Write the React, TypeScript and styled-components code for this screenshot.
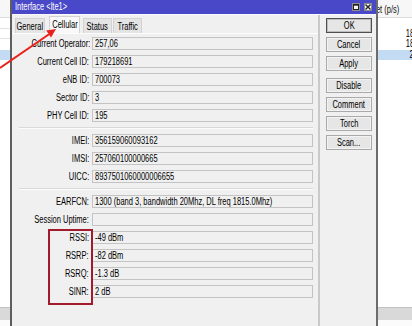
import React from "react";
import styled, { createGlobalStyle } from "styled-components";

const FONT = `"Liberation Sans", Arial, sans-serif`;

const Global = createGlobalStyle`
  html, body { margin: 0; padding: 0; background: #fff; }
  body { font-family: ${FONT}; font-size: 10px; color: #000; }
  * { box-sizing: border-box; }
`;

/* the screenshot's text is horizontally condensed: squeeze glyph runs */
const Txt = styled.span<{ $origin?: "left" | "right" | "center" }>`
  display: inline-block;
  white-space: nowrap;
  transform: scaleX(0.75);
  transform-origin: ${(p) => p.$origin ?? "left"} center;
`;

const Screen = styled.div`
  position: relative;
  width: 412px;
  height: 326px;
  overflow: hidden;
  display: flex;
  background: #fff;
`;

/* ---------- background list window ---------- */
const BgList = styled.div<{ $fixed?: number }>`
  flex: ${(p) => (p.$fixed ? `0 0 ${p.$fixed}px` : "1 1 0")};
  min-width: 0;
  display: flex;
  flex-direction: column;
  background: #fff;
`;

const BgHeader = styled.div`
  height: 18px;
  flex: 0 0 18px;
  display: flex;
  align-items: center;
  justify-content: flex-end;
  overflow: hidden;
  white-space: nowrap;
  padding: 2px 13px 0 0;
  background: #f7f7f7;
  border-bottom: 1px solid #dcdcdc;
  color: #111;
`;

const BgRow = styled.div<{ $selected?: boolean; $line?: boolean }>`
  height: 10.5px;
  flex: 0 0 10.5px;
  display: flex;
  align-items: center;
  justify-content: flex-end;
  overflow: hidden;
  white-space: nowrap;
  line-height: 10px;
  margin-right: -2px;
  background: ${(p) => (p.$selected ? "#c3dbf3" : "#fff")};
  border-bottom: ${(p) => (p.$line ? "1px solid #e2e2e2" : "none")};
  color: #000;
`;

const BgSpacer = styled.div`
  flex: 1 1 auto;
`;

const BgScroll = styled.div`
  flex: 0 0 13px;
  background: #d9d9d9;
  border-top: 1px solid #c2c2c2;
`;

const BgBottom = styled.div`
  flex: 0 0 6px;
  background: #fbfbfb;
`;

/* ---------- dialog ---------- */
const Dialog = styled.div`
  flex: 0 0 368px;
  display: flex;
  flex-direction: column;
  background: #f0f0f0;
  border-left: 2px solid #5e5e5e;
  border-right: 2px solid #6c6c6c;
`;

const TitleBar = styled.div`
  height: 15px;
  flex: 0 0 15px;
  display: flex;
  align-items: center;
  padding: 0 4px 1px 3px;
  background: #4848c8;
  border-bottom: 1px solid #fafafa;
  color: #fff;
`;

const TitleText = styled.div`
  flex: 1 1 auto;
  line-height: 13px;
  white-space: nowrap;
`;

const TitleButtons = styled.div`
  display: flex;
  gap: 4px;
`;

const TitleButton = styled.div`
  width: 8px;
  height: 8px;
  background: #f4f4f4;
  border: 1px solid #8c8c8c;
  display: flex;
  align-items: center;
  justify-content: center;
`;

const Body = styled.div`
  flex: 1 1 auto;
  display: flex;
`;

const TabArea = styled.div`
  flex: 0 0 308px;
  display: flex;
  flex-direction: column;
  border-right: 2px solid #c9c9c9;
`;

const TabStrip = styled.div`
  height: 18px;
  flex: 0 0 18px;
  display: flex;
  align-items: flex-end;
  padding-left: 3px;
`;

const Tab = styled.div<{ $active?: boolean; $w: number; $mr: number }>`
  width: ${(p) => p.$w}px;
  margin-right: ${(p) => p.$mr}px;
  height: ${(p) => (p.$active ? 17 : 15)}px;
  display: flex;
  align-items: center;
  justify-content: center;
  white-space: nowrap;
  padding-bottom: ${(p) => (p.$active ? 1 : 0)}px;
  background: ${(p) => (p.$active ? "#f8f8f8" : "#e4e4e4")};
  border: 1px solid #d2d2d2;
  border-bottom: none;
  color: #000;
`;

const TabPage = styled.div`
  flex: 1 1 auto;
  border-top: 1px solid #fdfdfd;
  padding-top: 3px;
`;

const Form = styled.div`
  display: grid;
  grid-template-columns: 77px 221px;
  column-gap: 3px;
  row-gap: 5px;
`;

const Label = styled.div`
  height: 13px;
  line-height: 13px;
  text-align: right;
  white-space: nowrap;
  color: #000;
`;

const Field = styled.div`
  height: 13px;
  line-height: 11px;
  padding-left: 2px;
  border: 1px solid #c3c3c3;
  background: #f0f0f0;
  white-space: nowrap;
  overflow: hidden;
  color: #000;
`;

const Separator = styled.div`
  grid-column: 1 / -1;
  margin-left: 7px;
  height: 2px;
  border-top: 1px solid #dadada;
  border-bottom: 1px solid #fbfbfb;
`;

const ButtonColumn = styled.div`
  flex: 1 1 auto;
  display: flex;
  flex-direction: column;
  padding: 3px 0 0 6px;
`;

const DlgButton = styled.div<{ $default?: boolean; $gapBefore?: number }>`
  width: 46px;
  height: 15px;
  margin-bottom: 4px;
  margin-top: ${(p) => p.$gapBefore ?? 0}px;
  display: flex;
  align-items: center;
  justify-content: center;
  white-space: nowrap;
  background: #e6e6e6;
  border: 1px solid ${(p) => (p.$default ? "#4f4f4f" : "#a9a9a9")};
  box-shadow: inset 0 0 0 1px ${(p) => (p.$default ? "#bdbdbd" : "#f3f3f3")};
  color: #000;
`;

/* ---------- annotations ---------- */
const ArrowLayer = styled.svg`
  position: absolute;
  left: 0;
  top: 0;
  pointer-events: none;
`;

const Highlight = styled.div`
  position: absolute;
  left: 48px;
  top: 229px;
  width: 45px;
  height: 76px;
  border: 2px solid #a11a2e;
  pointer-events: none;
`;

type Row = { label: string; value: string } | "sep";

const rows: Row[] = [
  { label: "Current Operator:", value: "257,06" },
  { label: "Current Cell ID:", value: "179218691" },
  { label: "eNB ID:", value: "700073" },
  { label: "Sector ID:", value: "3" },
  { label: "PHY Cell ID:", value: "195" },
  "sep",
  { label: "IMEI:", value: "356159060093162" },
  { label: "IMSI:", value: "257060100000665" },
  { label: "UICC:", value: "8937501060000006655" },
  "sep",
  { label: "EARFCN:", value: "1300 (band 3, bandwidth 20Mhz, DL freq 1815.0Mhz)" },
  { label: "Session Uptime:", value: "" },
  { label: "RSSI:", value: "-49 dBm" },
  { label: "RSRP:", value: "-82 dBm" },
  { label: "RSRQ:", value: "-1.3 dB" },
  { label: "SINR:", value: "2 dB" },
];

const tabs = [
  { name: "General", w: 30, mr: 4 },
  { name: "Cellular", w: 31, mr: 3, active: true },
  { name: "Status", w: 29, mr: 1 },
  { name: "Traffic", w: 29, mr: 0 },
];

const buttons = [
  { name: "OK", def: true },
  { name: "Cancel" },
  { name: "Apply" },
  { name: "Disable", gap: 3 },
  { name: "Comment" },
  { name: "Torch" },
  { name: "Scan..." },
];

export default function App() {
  return (
    <>
      <Global />
      <Screen>
        <BgList $fixed={10}>
          <BgHeader />
          <BgRow $line />
          <BgRow $line />
          <BgRow />
          <BgRow $selected />
          <BgSpacer />
          <BgScroll />
          <BgBottom />
        </BgList>

        <Dialog>
          <TitleBar>
            <TitleText>
              <Txt>Interface &lt;lte1&gt;</Txt>
            </TitleText>
            <TitleButtons>
              <TitleButton>
                <svg width="6" height="6" viewBox="0 0 6 6">
                  <rect x="0.5" y="0.5" width="5" height="5" fill="none" stroke="#222" strokeWidth="1" />
                  <line x1="0" y1="1.2" x2="6" y2="1.2" stroke="#222" strokeWidth="1" />
                </svg>
              </TitleButton>
              <TitleButton>
                <svg width="6" height="6" viewBox="0 0 6 6">
                  <path d="M0.5 0.5 L5.5 5.5 M5.5 0.5 L0.5 5.5" stroke="#222" strokeWidth="1.4" />
                </svg>
              </TitleButton>
            </TitleButtons>
          </TitleBar>

          <Body>
            <TabArea>
              <TabStrip>
                {tabs.map((t) => (
                  <Tab key={t.name} $w={t.w} $mr={t.mr} $active={t.active}>
                    <Txt $origin="center">{t.name}</Txt>
                  </Tab>
                ))}
              </TabStrip>
              <TabPage>
                <Form>
                  {rows.map((r, i) =>
                    r === "sep" ? (
                      <Separator key={i} />
                    ) : (
                      <React.Fragment key={i}>
                        <Label>
                          <Txt $origin="right">{r.label}</Txt>
                        </Label>
                        <Field>
                          <Txt>{r.value}</Txt>
                        </Field>
                      </React.Fragment>
                    )
                  )}
                </Form>
              </TabPage>
            </TabArea>

            <ButtonColumn>
              {buttons.map((b) => (
                <DlgButton key={b.name} $default={b.def} $gapBefore={b.gap}>
                  <Txt $origin="center">{b.name}</Txt>
                </DlgButton>
              ))}
            </ButtonColumn>
          </Body>
        </Dialog>

        <BgList>
          <BgHeader>
            <Txt $origin="right">Tx Packet (p/s)</Txt>
          </BgHeader>
          <BgRow />
          <BgRow>
            <Txt $origin="right">18</Txt>
          </BgRow>
          <BgRow>
            <Txt $origin="right">18</Txt>
          </BgRow>
          <BgRow $selected>
            <Txt $origin="right">2</Txt>
          </BgRow>
          <BgSpacer />
          <BgScroll />
          <BgBottom />
        </BgList>

        <ArrowLayer width="412" height="326" viewBox="0 0 412 326">
          <line x1="0" y1="68" x2="49" y2="34.2" stroke="#e8211d" strokeWidth="2" />
          <polygon points="56,29 51,37.6 46.2,30.6" fill="#e8211d" />
        </ArrowLayer>
        <Highlight />
      </Screen>
    </>
  );
}
